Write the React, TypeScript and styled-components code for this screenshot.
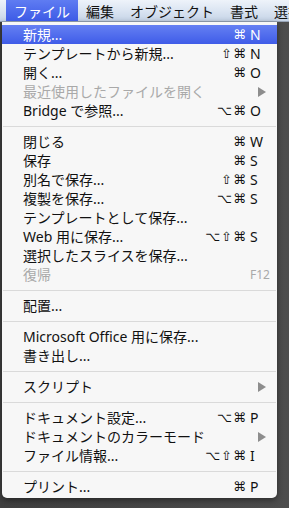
import React from "react";
import styled, { createGlobalStyle } from "styled-components";

type Entry =
  | { type: "sep" }
  | {
      type?: "item";
      label: string;
      mods?: string;
      keyName?: string;
      submenu?: boolean;
      disabled?: boolean;
      active?: boolean;
      small?: boolean;
    };

const entries: Entry[] = [
  { label: "新規...", mods: "⌘", keyName: "N", active: true },
  { label: "テンプレートから新規...", mods: "⇧⌘", keyName: "N" },
  { label: "開く...", mods: "⌘", keyName: "O" },
  { label: "最近使用したファイルを開く", submenu: true, disabled: true },
  { label: "Bridge で参照...", mods: "⌥⌘", keyName: "O" },
  { type: "sep" },
  { label: "閉じる", mods: "⌘", keyName: "W" },
  { label: "保存", mods: "⌘", keyName: "S" },
  { label: "別名で保存...", mods: "⇧⌘", keyName: "S" },
  { label: "複製を保存...", mods: "⌥⌘", keyName: "S" },
  { label: "テンプレートとして保存..." },
  { label: "Web 用に保存...", mods: "⌥⇧⌘", keyName: "S" },
  { label: "選択したスライスを保存..." },
  { label: "復帰", keyName: "F12", disabled: true, small: true },
  { type: "sep" },
  { label: "配置..." },
  { type: "sep" },
  { label: "Microsoft Office 用に保存..." },
  { label: "書き出し..." },
  { type: "sep" },
  { label: "スクリプト", submenu: true },
  { type: "sep" },
  { label: "ドキュメント設定...", mods: "⌥⌘", keyName: "P" },
  { label: "ドキュメントのカラーモード", submenu: true },
  { label: "ファイル情報...", mods: "⌥⇧⌘", keyName: "I" },
  { type: "sep" },
  { label: "プリント...", mods: "⌘", keyName: "P" },
];

const titles = ["ファイル", "編集", "オブジェクト", "書式", "選択"];

const App: React.FC = () => {
  return (
    <>
      <GlobalStyle />
      <Screen>
        <MenuBar>
          {titles.map((t, i) => (
            <MenuTitle key={t} $active={i === 0}>
              {t}
            </MenuTitle>
          ))}
        </MenuBar>
        <Dropdown>
          {entries.map((e, i) =>
            e.type === "sep" ? (
              <Separator key={i} />
            ) : (
              <Item key={i} $active={e.active} $disabled={e.disabled}>
                <Label>{e.label}</Label>
                <Mods>{e.mods}</Mods>
                <KeyCell $small={e.small}>
                  {e.submenu ? (
                    <Arrow width="8" height="10" viewBox="0 0 8 10">
                      <path d="M0 0 L8 5 L0 10 Z" fill="currentColor" />
                    </Arrow>
                  ) : (
                    e.keyName
                  )}
                </KeyCell>
              </Item>
            )
          )}
        </Dropdown>
      </Screen>
    </>
  );
};

export default App;

const GlobalStyle = createGlobalStyle`
  html, body {
    margin: 0;
    padding: 0;
    background: #4b4b4b;
  }
  body {
    font-family: "Noto Sans", "Noto Sans CJK JP", "DejaVu Sans", sans-serif;
  }
`;

const Screen = styled.div`
  width: 289px;
  height: 508px;
  overflow: hidden;
  background: linear-gradient(90deg, #3f3f3f 0, #4d4d4d 100%);
`;

const MenuBar = styled.div`
  display: flex;
  height: 22px;
  padding-left: 6px;
  background: linear-gradient(#eef3fa 0%, #dbe5f2 50%, #c6d4e7 100%);
  border-bottom: 1px solid #98a5b7;
  box-sizing: border-box;
  white-space: nowrap;
`;

const MenuTitle = styled.div<{ $active?: boolean }>`
  display: flex;
  align-items: center;
  height: 100%;
  padding: 0 8px;
  font-size: 14px;
  color: ${(p) => (p.$active ? "#fff" : "#111")};
  background: ${(p) =>
    p.$active ? "linear-gradient(#5f7cf2 0%, #3d5be6 100%)" : "transparent"};
`;

const Dropdown = styled.div`
  margin-left: 2px;
  width: 275px;
  padding: 3px 0 2px;
  background: #f7f7f7;
  border-radius: 0 0 5px 5px;
  box-shadow: 0 2px 6px rgba(0, 0, 0, 0.45);
`;

const Item = styled.div<{ $active?: boolean; $disabled?: boolean }>`
  display: grid;
  grid-template-columns: 1fr auto 22px;
  align-items: center;
  height: 19px;
  padding: 0 5px 0 21px;
  font-size: 14px;
  white-space: nowrap;
  color: ${(p) => (p.$active ? "#fff" : p.$disabled ? "#a9a9a9" : "#111")};
  background: ${(p) =>
    p.$active ? "linear-gradient(#6580f3 0%, #3f5ce8 100%)" : "transparent"};
`;

const Label = styled.span`
  line-height: 19px;
`;

const Mods = styled.span`
  text-align: right;
  padding-right: 3px;
  font-family: "DejaVu Sans", sans-serif;
  font-size: 13px;
  letter-spacing: 1px;
`;

const KeyCell = styled.span<{ $small?: boolean }>`
  display: flex;
  align-items: center;
  font-size: ${(p) => (p.$small ? "12px" : "14px")};
  color: inherit;
`;

const Arrow = styled.svg`
  margin-left: 8px;
  color: #8d8d8d;
`;

const Separator = styled.div`
  height: 12px;
  display: flex;
  align-items: center;

  &::after {
    content: "";
    flex: 1;
    height: 1px;
    margin: 0 1px;
    background: #dadada;
  }
`;
